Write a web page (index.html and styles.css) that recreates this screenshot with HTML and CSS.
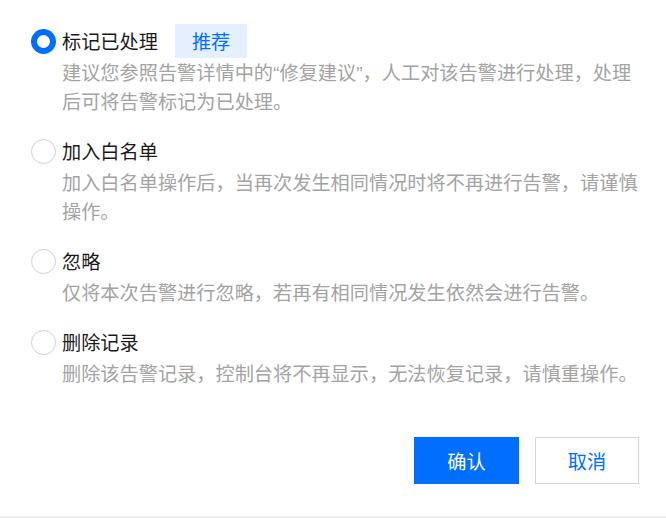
FILE: index.html
```html
<!DOCTYPE html>
<html lang="zh-CN">
<head>
<meta charset="utf-8">
<link rel="stylesheet" href="styles.css">
</head>
<body>
<div class="dialog">
  <div class="options">
    <div class="option">
      <div class="option-head">
        <span class="radio radio-checked"></span>
        <span class="option-title">标记已处理</span>
        <span class="tag">推荐</span>
      </div>
      <div class="option-desc">建议您参照告警详情中的“修复建议”，人工对该告警进行处理，处理后可将告警标记为已处理。</div>
    </div>
    <div class="option">
      <div class="option-head">
        <span class="radio"></span>
        <span class="option-title">加入白名单</span>
      </div>
      <div class="option-desc">加入白名单操作后，当再次发生相同情况时将不再进行告警，请谨慎操作。</div>
    </div>
    <div class="option">
      <div class="option-head">
        <span class="radio"></span>
        <span class="option-title">忽略</span>
      </div>
      <div class="option-desc">仅将本次告警进行忽略，若再有相同情况发生依然会进行告警。</div>
    </div>
    <div class="option">
      <div class="option-head">
        <span class="radio"></span>
        <span class="option-title">删除记录</span>
      </div>
      <div class="option-desc">删除该告警记录，控制台将不再显示，无法恢复记录，请慎重操作。</div>
    </div>
  </div>
  <div class="footer">
    <button class="btn btn-primary">确认</button>
    <button class="btn btn-default">取消</button>
  </div>
</div>
</body>
</html>
```

FILE: styles.css
```css
* {
  box-sizing: border-box;
}
html, body {
  margin: 0;
  padding: 0;
  background: #fff;
}
body {
  font-family: "PingFang SC", "Noto Sans CJK SC", "Noto Sans", sans-serif;
  font-size: 19.2px;
}
.dialog {
  width: 666px;
  height: 518px;
  padding: 25px 27px 0 31px;
  border-bottom: 2px solid #ededed;
  display: flex;
  flex-direction: column;
}
.options {
  display: flex;
  flex-direction: column;
  gap: 18px;
}
.option-head {
  display: flex;
  align-items: center;
  height: 32px;
}
.radio {
  width: 25px;
  height: 25px;
  border-radius: 50%;
  border: 1px solid #cdd0d4;
  background: #fff;
  flex: none;
}
.radio-checked {
  border: 6px solid #006eff;
}
.option-title {
  margin-left: 6px;
  color: #1a1a1a;
  line-height: 32px;
}
.tag {
  margin-left: 17px;
  height: 34px;
  padding: 0 17px;
  line-height: 34px;
  background: #e5f0ff;
  color: #006eff;
  flex: none;
}
.option-desc {
  padding: 2px 0 0 31px;
  font-family: "Liberation Sans", "Noto Sans CJK SC", sans-serif;
  color: #a3a3a3;
  line-height: 29px;
}
.footer {
  margin-top: 48px;
  display: flex;
  justify-content: flex-end;
  gap: 16px;
}
.btn {
  width: 105px;
  height: 47px;
  font-family: inherit;
  font-size: 19.2px;
  border-radius: 0;
  cursor: pointer;
  padding: 0;
}
.btn-primary {
  background: #006eff;
  color: #fff;
  border: none;
}
.btn-default {
  width: 104px;
  background: #fff;
  color: #006eff;
  border: 1.5px solid #cfd5de;
}
```
